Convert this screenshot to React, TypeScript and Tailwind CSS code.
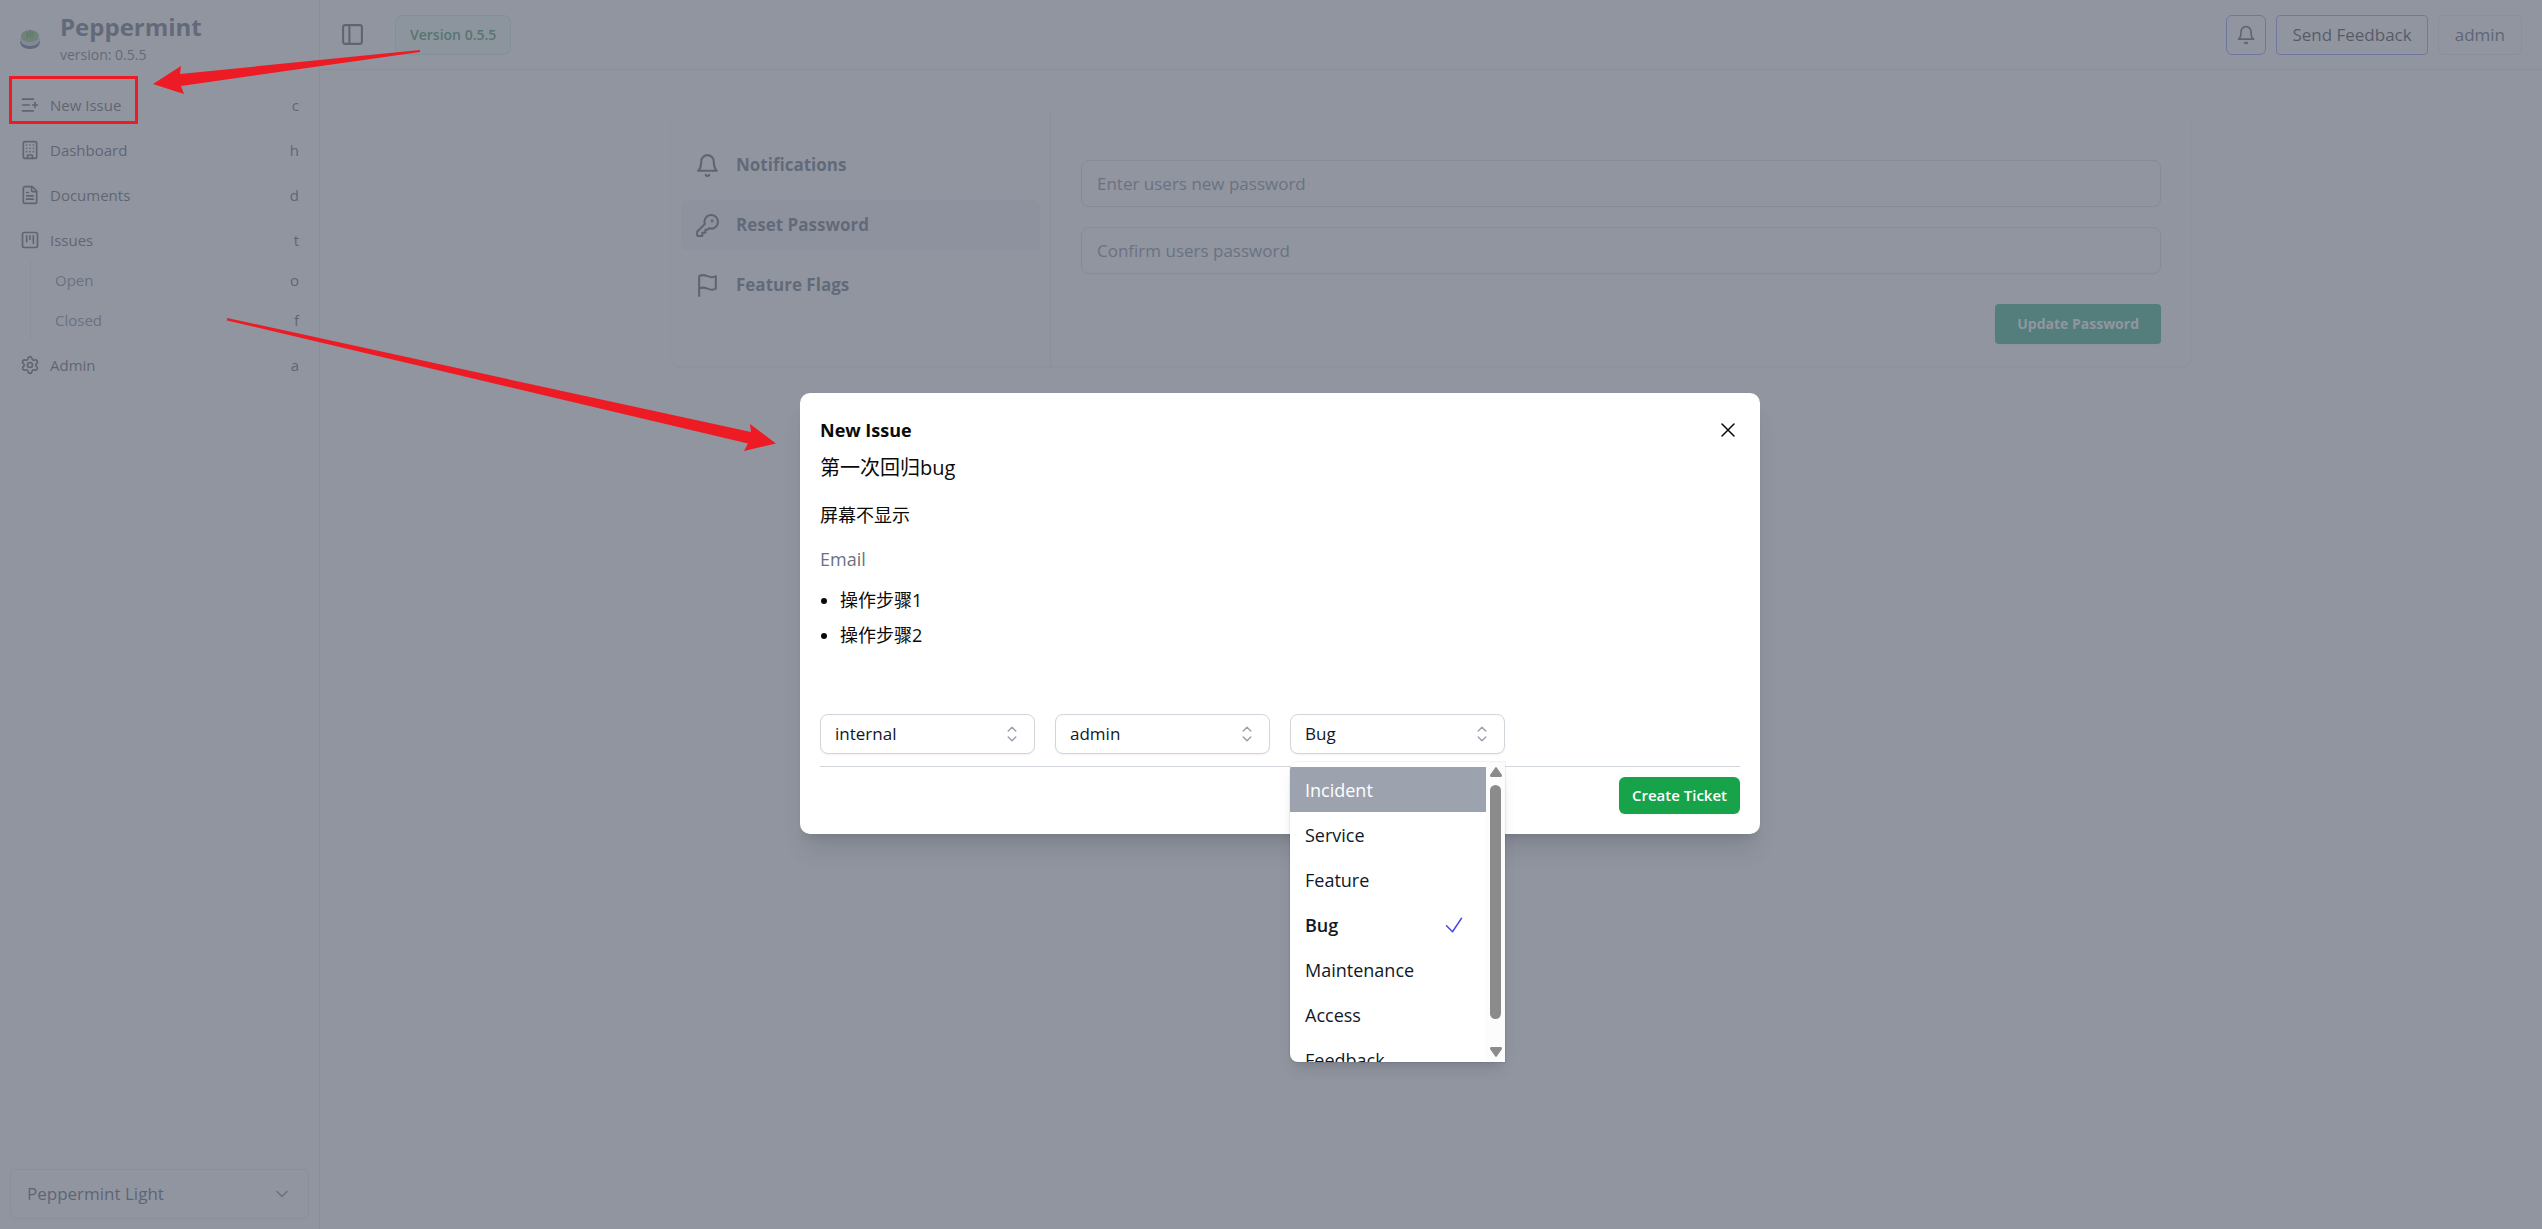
import { useState } from "react";
import type { ComponentType } from "react";
import { HiOutlineCheck, HiOutlineChevronUpDown, HiOutlineXMark } from "react-icons/hi2";
import { Building, FileText, ListPlus, PanelLeft, Settings, SquareKanban, ChevronDown } from "lucide-react";

type IconProps = { className?: string };

const stroke = {
  viewBox: "0 0 24 24",
  fill: "none",
  stroke: "currentColor",
  strokeWidth: 2,
  strokeLinecap: "round",
  strokeLinejoin: "round",
  "aria-hidden": true,
} as const;

function BellIcon({ className }: IconProps) {
  return (
    <svg {...stroke} className={className}>
      <path d="M6 8a6 6 0 0 1 12 0c0 7 3 9 3 9H3s3-2 3-9" />
      <path d="M10.300 21a1.940 1.940 0 0 0 3.400 0" />
    </svg>
  );
}

function KeyIcon({ className }: IconProps) {
  return (
    <svg {...stroke} className={className}>
      <path d="M2 18v3c0 .6.4 1 1 1h4v-3h3v-3h2l1.400-1.400a6.500 6.500 0 1 0-4-4Z" />
      <circle cx="16.500" cy="7.500" r=".5" fill="currentColor" />
    </svg>
  );
}

function FlagIcon({ className }: IconProps) {
  return (
    <svg {...stroke} className={className}>
      <path d="M4 15s1-1 4-1 5 2 8 2 4-1 4-1V3s-1 1-4 1-5-2-8-2-4 1-4 1z" />
      <path d="M4 22v-7" />
    </svg>
  );
}

function Logo() {
  return (
    <svg viewBox="0 0 20 20" className="size-5 shrink-0" aria-hidden="true">
      <path d="M0 12c0 5 4 8 10 8s10-3 10-8z" fill="#475069" />
      <path d="M0 9c0 5 4 8 10 8s10-3 10-8z" fill="#c3cade" />
      <ellipse cx="10" cy="7" rx="9" ry="6" fill="#77b255" />
      <path d="M8 9c-2-2 1-3-1-6M10 8c-1-2 2-4 0-7M12 8c-1-2 2-3 1-5" fill="none" stroke="#3e721d" strokeWidth="1" />
    </svg>
  );
}

const nav = [
  { label: "New Issue", key: "c", Icon: ListPlus },
  { label: "Dashboard", key: "h", Icon: Building },
  { label: "Documents", key: "d", Icon: FileText },
  { label: "Issues", key: "t", Icon: SquareKanban },
];

function NavItem({ label, hint, Icon }: { label: string; hint: string; Icon: typeof Building }) {
  return (
    <a href="#" className="mt-[5px] flex h-10 items-center gap-2.5 px-2.5 text-[15px] text-zinc-700">
      <Icon className="size-5 shrink-0" strokeWidth={2} />
      <span className="flex-1">{label}</span>
      <span>{hint}</span>
    </a>
  );
}

function Sidebar() {
  return (
    <aside className="flex w-80 shrink-0 flex-col border-r border-gray-200 px-2.5 pb-2.5">
      <div className="flex items-center gap-5 px-2.5 pt-[11px]">
        <Logo />
        <div>
          <p className="text-2xl leading-8 font-bold text-gray-600">Peppermint</p>
          <p className="text-sm leading-6 text-gray-600">version: 0.5.5</p>
        </div>
      </div>
      <nav className="mt-[13px] flex flex-col">
        {nav.map((n) => (
          <NavItem key={n.label} label={n.label} hint={n.key} Icon={n.Icon} />
        ))}
        <ul className="ml-5 border-l border-gray-200 text-[15px] text-gray-500">
          {[["Open", "o"], ["Closed", "f"]].map(([label, key]) => (
            <li key={label}>
              <a href="#" className="flex h-10 items-center justify-between pr-2.5 pl-6">
                <span>{label}</span>
                <span className="text-zinc-700">{key}</span>
              </a>
            </li>
          ))}
        </ul>
        <NavItem label="Admin" hint="a" Icon={Settings} />
      </nav>
      <button type="button" className="mt-auto flex h-[50px] items-center justify-between rounded-md border border-gray-200 px-4 text-[17px] text-gray-700">
        <span>Peppermint Light</span>
        <ChevronDown className="size-5 text-gray-500" />
      </button>
    </aside>
  );
}

function TopBar() {
  return (
    <header className="flex h-[70px] items-center border-b border-gray-200 px-5">
      <button type="button" aria-label="Toggle sidebar" className="text-zinc-700">
        <PanelLeft className="size-[25px]" />
      </button>
      <span className="ml-[30px] flex h-10 items-center rounded-lg bg-[#f0fdf4] px-[15px] text-sm font-semibold text-[#15803d] ring-1 ring-[#16a34a]/20 ring-inset">
        Version 0.5.5
      </span>
      <div className="ml-auto flex gap-2.5 text-[17px] font-medium">
        <button type="button" aria-label="Notifications" className="flex size-10 items-center justify-center rounded-md border border-indigo-400 text-zinc-700">
          <BellIcon className="size-5" />
        </button>
        <button type="button" className="h-10 rounded border border-indigo-400 px-[15px] text-neutral-900">
          Send Feedback
        </button>
        <button type="button" className="h-10 rounded-md border border-gray-200 px-4 text-gray-700">
          admin
        </button>
      </div>
    </header>
  );
}

const settings: { label: string; Icon: ComponentType<IconProps> }[] = [
  { label: "Notifications", Icon: BellIcon },
  { label: "Reset Password", Icon: KeyIcon },
  { label: "Feature Flags", Icon: FlagIcon },
];

function PasswordPanel() {
  return (
    <main className="px-10 pt-10">
      <div className="mx-auto flex max-w-[1520px] rounded-lg shadow">
        <nav className="flex w-[380px] shrink-0 flex-col gap-2.5 border-r border-gray-200 px-2.5 pt-[30px] pb-14">
          {settings.map(({ label, Icon }) => (
            <a
              key={label}
              href="#"
              className={
                label === "Reset Password"
                  ? "flex h-[50px] items-center gap-4 rounded-md bg-zinc-100 px-3.5 text-[17px] font-bold text-gray-600"
                  : "flex h-[50px] items-center gap-4 rounded-md px-3.5 text-[17px] font-bold text-gray-600"
              }
            >
              <Icon className="size-[25px] text-zinc-700" />
              {label}
            </a>
          ))}
        </nav>
        <form className="flex flex-1 flex-col gap-5 px-[30px] pt-[50px] pb-5">
          <input
            type="password"
            aria-label="New password"
            placeholder="Enter users new password"
            className="h-[47px] rounded-lg border border-gray-300 px-[15px] text-[17px] shadow-xs placeholder:text-gray-500"
          />
          <input
            type="password"
            aria-label="Confirm password"
            placeholder="Confirm users password"
            className="h-[47px] rounded-lg border border-gray-300 px-[15px] text-[17px] shadow-xs placeholder:text-gray-500"
          />
          <button type="button" className="mt-2.5 h-10 self-end rounded bg-[#0da271] px-[22px] text-sm font-bold text-white shadow-xs">
            Update Password
          </button>
        </form>
      </div>
    </main>
  );
}

const types = ["Incident", "Service", "Feature", "Bug", "Maintenance", "Access", "Feedback"];

function TypeMenu() {
  return (
    <div className="absolute top-full left-0 z-20 mt-2 flex h-[300px] w-full overflow-hidden rounded-l-lg bg-white shadow-lg ring-1 ring-black/5">
      <ul role="listbox" aria-label="Issue type" className="flex-1 overflow-hidden pt-[5px] text-lg text-gray-900">
        {types.map((t) => (
          <li
            key={t}
            role="option"
            aria-selected={t === "Bug"}
            className={
              t === "Incident"
                ? "flex h-[45px] items-center bg-[#9ca3af] px-[15px] text-white"
                : t === "Bug"
                  ? "flex h-[45px] items-center justify-between pr-5 pl-[15px] font-semibold"
                  : "flex h-[45px] items-center px-[15px]"
            }
          >
            {t}
            {t === "Bug" && <HiOutlineCheck className="size-6 text-[#4f46e5]" />}
          </li>
        ))}
      </ul>
      <div className="flex w-[19px] flex-col items-center bg-[#fcfcfc] py-[5px]">
        <svg viewBox="0 0 12 10" className="h-2.5 w-3" aria-hidden="true">
          <path d="M5 1Q6-1 7 1L12 8Q12 10 11 10H1Q0 10 0 8z" fill="#8b8b8b" />
        </svg>
        <div className="mt-2 h-[234px] w-[11px] rounded-full bg-[#8b8b8b]" />
        <svg viewBox="0 0 12 10" className="mt-auto h-2.5 w-3" aria-hidden="true">
          <path d="M5 9Q6 11 7 9L12 2Q12 0 11 0H1Q0 0 0 2z" fill="#8b8b8b" />
        </svg>
      </div>
    </div>
  );
}

function Picker({ value, open }: { value: string; open?: boolean }) {
  return (
    <div className="relative w-[215px]">
      <button type="button" aria-haspopup="listbox" className="flex h-10 w-full items-center justify-between rounded-lg border border-gray-300 bg-white pr-2.5 pl-3.5 text-[17px] text-gray-900 shadow-xs">
        {value}
        <HiOutlineChevronUpDown className="size-6 text-gray-400" />
      </button>
      {open && <TypeMenu />}
    </div>
  );
}

function IssueDialog() {
  const [title, setTitle] = useState("第一次回归bug");
  const [name, setName] = useState("屏幕不显示");
  return (
    <section role="dialog" aria-label="New Issue" className="flex w-[960px] flex-col rounded-[10px] bg-white p-5 text-neutral-950 shadow-xl">
      <div className="flex h-[33px] items-center justify-between">
        <h2 className="text-lg font-bold">New Issue</h2>
        <button type="button" aria-label="Close"><HiOutlineXMark className="size-6" /></button>
      </div>
      <input aria-label="Issue title" value={title} onChange={(e) => setTitle(e.target.value)} className="h-10 text-xl outline-none" />
      <input aria-label="Name" value={name} onChange={(e) => setName(e.target.value)} className="mt-2 h-10 text-lg outline-none" />
      <input aria-label="Email" type="email" placeholder="Email" className="mt-[5px] h-10 text-lg placeholder:text-gray-500 outline-none" />
      <ul className="mt-1 mb-[61px] list-disc pl-5 text-lg leading-[35px]">
        <li>操作步骤1</li>
        <li>操作步骤2</li>
      </ul>
      <div className="flex gap-5">
        <Picker value="internal" />
        <Picker value="admin" />
        <Picker value="Bug" open />
      </div>
      <div className="mt-3 flex justify-end border-t border-gray-300 pt-2.5">
        <button type="button" className="h-[37px] rounded-md bg-[#16a34a] px-[13px] text-[15px] font-semibold text-white shadow-xs">
          Create Ticket
        </button>
      </div>
    </section>
  );
}

function Annotations() {
  return (
    <div className="pointer-events-none absolute inset-0 z-30" aria-hidden="true">
      <div className="absolute top-[76px] left-[9px] h-12 w-[129px] border-3 border-[#ed1c24]" />
      <svg className="absolute top-0 left-0 h-[500px] w-[800px]" viewBox="0 0 800 500" fill="#ed1c24">
        <path d="M153 84 181 66 180 74 420 50V52L181 86 184 94z" />
        <path d="M227 318 751 432 750 424 776 443.500 744 451 748 443.500 227 320.500z" />
      </svg>
    </div>
  );
}

export default function App() {
  return (
    <div className="relative flex min-h-screen bg-white font-['Open_Sans','Noto_Sans_CJK_SC',sans-serif]">
      <Sidebar />
      <div className="min-w-0 flex-1">
        <TopBar />
        <PasswordPanel />
      </div>
      <div className="absolute inset-0 z-10 flex items-start justify-center bg-[#6b7280]/75 pt-[393px] pl-[18px]">
        <IssueDialog />
      </div>
      <Annotations />
    </div>
  );
}
